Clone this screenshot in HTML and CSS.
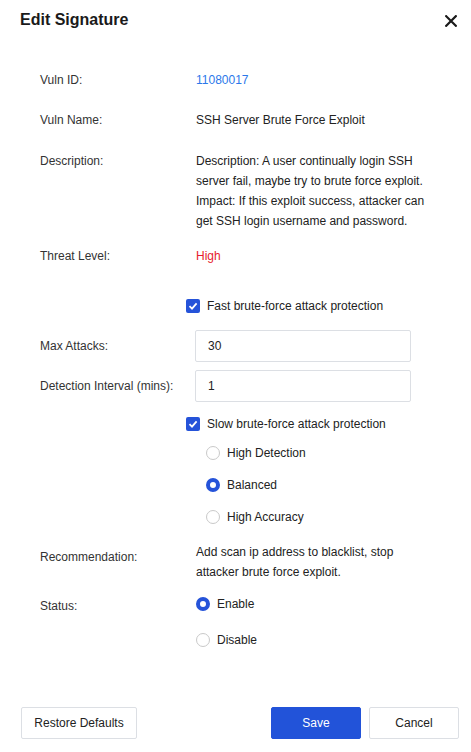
FILE: index.html
```html
<!DOCTYPE html>
<html>
<head>
<meta charset="utf-8">
<link rel="stylesheet" href="styles.css">
</head>
<body>
<div class="dialog">
  <div class="header">
    <div class="title">Edit Signature</div>
    <button class="close" aria-label="Close">
      <svg width="12" height="12" viewBox="0 0 12 12"><path d="M1.2 1.2 L10.8 10.8 M10.8 1.2 L1.2 10.8" stroke="#1a1a1a" stroke-width="2.2" stroke-linecap="square"/></svg>
    </button>
  </div>

  <div class="form">
    <div class="row r-id">
      <div class="label">Vuln ID:</div>
      <div class="value link">11080017</div>
    </div>
    <div class="row r-name">
      <div class="label">Vuln Name:</div>
      <div class="value">SSH Server Brute Force Exploit</div>
    </div>
    <div class="row r-desc">
      <div class="label">Description:</div>
      <div class="value">Description: A user continually login SSH server fail, maybe try to brute force exploit. Impact: If this exploit success, attacker can get SSH login username and password.</div>
    </div>
    <div class="row r-threat">
      <div class="label">Threat Level:</div>
      <div class="value danger">High</div>
    </div>

    <div class="check r-fast">
      <span class="box"><svg width="10" height="10" viewBox="0 0 10 10"><path d="M1.5 5.2 L4 7.6 L8.6 2.4" fill="none" stroke="#fff" stroke-width="1.8"/></svg></span>
      <span>Fast brute-force attack protection</span>
    </div>

    <div class="row r-max">
      <div class="label">Max Attacks:</div>
      <div class="input">30</div>
    </div>
    <div class="row r-int">
      <div class="label">Detection Interval (mins):</div>
      <div class="input">1</div>
    </div>

    <div class="check r-slow">
      <span class="box"><svg width="10" height="10" viewBox="0 0 10 10"><path d="M1.5 5.2 L4 7.6 L8.6 2.4" fill="none" stroke="#fff" stroke-width="1.8"/></svg></span>
      <span>Slow brute-force attack protection</span>
    </div>

    <div class="radios sub">
      <div class="radio"><span class="dot"></span><span>High Detection</span></div>
      <div class="radio"><span class="dot on"></span><span>Balanced</span></div>
      <div class="radio"><span class="dot"></span><span>High Accuracy</span></div>
    </div>

    <div class="row r-rec">
      <div class="label rec-label">Recommendation:</div>
      <div class="value">Add scan ip address to blacklist, stop attacker brute force exploit.</div>
    </div>

    <div class="row r-status">
      <div class="label status-label">Status:</div>
      <div class="radios">
        <div class="radio"><span class="dot on"></span><span>Enable</span></div>
        <div class="radio"><span class="dot"></span><span>Disable</span></div>
      </div>
    </div>
  </div>

  <div class="footer">
    <button class="btn">Restore Defaults</button>
    <div class="right">
      <button class="btn primary">Save</button>
      <button class="btn">Cancel</button>
    </div>
  </div>
</div>
</body>
</html>
```

FILE: styles.css
```css
html, body {
  margin: 0;
  padding: 0;
  background: #fff;
}
body {
  font-family: "Liberation Sans", Arial, sans-serif;
  font-size: 12px;
  color: #333;
}
.dialog {
  width: 471px;
  height: 752px;
}
.header {
  display: flex;
  align-items: center;
  justify-content: space-between;
  height: 20px;
  padding: 10px 14px 0 20px;
}
.title {
  font-size: 16px;
  font-weight: bold;
  color: #1a1a1a;
  line-height: 20px;
}
.close {
  border: 0;
  background: none;
  padding: 0;
  width: 12px;
  height: 12px;
  margin-top: 1px;
  display: flex;
}
.form {
  padding-left: 40px;
}
.row {
  display: flex;
  line-height: 20px;
}
.label {
  width: 156px;
  flex: none;
  color: #333;
}
.value {
  width: 240px;
  color: #222;
}
.link { color: #2b78ea; }
.danger { color: #e61c2e; }

.r-id { margin-top: 40px; }
.r-name { margin-top: 20px; }
.r-desc { margin-top: 21px; }
.r-threat { margin-top: 15px; }

.check {
  display: flex;
  align-items: center;
  line-height: 20px;
  padding-left: 146px;
  color: #222;
}
.box {
  width: 14px;
  height: 14px;
  border-radius: 2px;
  background: #2553d9;
  display: flex;
  align-items: center;
  justify-content: center;
  margin-right: 7px;
}
.r-fast { margin-top: 30px; }
.r-slow { margin-top: 12px; }

.r-max { margin-top: 14px; align-items: center; }
.r-int { margin-top: 8px; align-items: center; }
.input {
  width: 216px;
  height: 32px;
  box-sizing: border-box;
  border: 1px solid #dcdfe4;
  border-radius: 2px;
  padding-left: 12px;
  line-height: 30px;
  margin-left: -1px;
  color: #222;
}

.radios {
  display: flex;
  flex-direction: column;
  gap: 12px;
}
.radios.sub {
  padding-left: 166px;
  margin-top: 9px;
}
.radio {
  display: flex;
  align-items: center;
  line-height: 20px;
  color: #222;
}
.dot {
  width: 14px;
  height: 14px;
  box-sizing: border-box;
  border: 1px solid #c9c9c9;
  border-radius: 50%;
  margin-right: 7px;
  background: #fff;
}
.dot.on {
  border: 4px solid #2553d9;
}
.r-status .radios { gap: 16px; }

.r-rec { margin-top: 15px; }
.rec-label { padding-top: 5px; line-height: 20px; }
.r-status { margin-top: 12px; }
.status-label { padding-top: 2px; }

.footer {
  display: flex;
  justify-content: space-between;
  padding: 0 12px 0 21px;
  margin-top: 57px;
}
.right {
  display: flex;
  gap: 8px;
}
.btn {
  font-family: "Liberation Sans", Arial, sans-serif;
  font-size: 12px;
  height: 32px;
  border: 1px solid #dcdfe4;
  border-radius: 2px;
  background: #fff;
  color: #222;
  padding: 0;
  width: 116px;
}
.right .btn { width: 90px; }
.btn.primary {
  background: #2253d9;
  border-color: #2253d9;
  color: #fff;
}
```
